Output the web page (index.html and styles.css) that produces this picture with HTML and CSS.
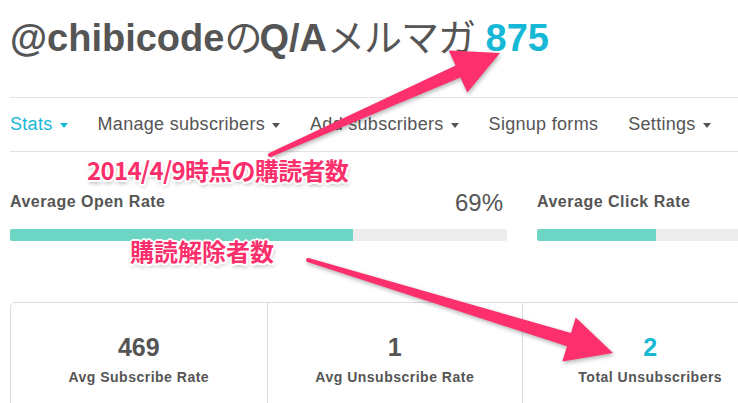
FILE: index.html
```html
<!DOCTYPE html>
<html lang="ja">
<head>
<meta charset="utf-8">
<title>Stats</title>
<link rel="stylesheet" href="styles.css">
</head>
<body>
<div class="screen">
  <div class="page">
    <h1 class="title">@chibicode<span class="jp no">の</span>Q/A<span class="jp kana">メルマガ</span> <span class="count">875</span></h1>

    <nav class="nav">
      <a class="nav-item active">Stats<span class="caret"></span></a>
      <a class="nav-item">Manage subscribers<span class="caret"></span></a>
      <a class="nav-item">Add subscribers<span class="caret"></span></a>
      <a class="nav-item">Signup forms</a>
      <a class="nav-item">Settings<span class="caret"></span></a>
    </nav>

    <section class="rates">
      <div class="rate">
        <div class="rate-head">
          <span class="rate-label">Average Open Rate</span>
          <span class="rate-value">69%</span>
        </div>
        <div class="bar"><div class="bar-fill" style="width:69%"></div></div>
      </div>
      <div class="rate">
        <div class="rate-head">
          <span class="rate-label">Average Click Rate</span>
          <span class="rate-value">24%</span>
        </div>
        <div class="bar"><div class="bar-fill" style="width:24%"></div></div>
      </div>
    </section>

    <section class="summary">
      <div class="cell">
        <div class="num">469</div>
        <div class="label">Avg Subscribe Rate</div>
      </div>
      <div class="cell">
        <div class="num">1</div>
        <div class="label">Avg Unsubscribe Rate</div>
      </div>
      <div class="cell">
        <div class="num highlight">2</div>
        <div class="label">Total Unsubscribers</div>
      </div>
      <div class="cell">
        <div class="num">0</div>
        <div class="label">Total Bounces</div>
      </div>
    </section>
  </div>

  <svg class="arrows" width="738" height="403" viewBox="0 0 738 403">
    <g class="arrow">
      <polygon points="270.8,157 460.4,77.6 467.3,92.6 500,53 448.7,50.6 455.6,65.6 269.2,153"/>
      <circle cx="270" cy="155" r="2"/>
    </g>
    <g class="arrow">
      <polygon points="307.4,261.9 567,346.3 562.3,361.6 613,353 575.7,317.6 571,332.9 308.6,258.1"/>
      <circle cx="308" cy="260" r="2"/>
    </g>
  </svg>

  <div class="note note-1">2014/4/9時点の購読者数</div>
  <div class="note note-2">購読解除者数</div>
</div>
</body>
</html>
```

FILE: styles.css
```css
html, body {
  margin: 0;
  padding: 0;
  background: #fff;
}

body {
  font-family: "Liberation Sans", Arial, "Noto Sans CJK JP", sans-serif;
  color: #555;
  overflow: hidden;
}

.screen {
  position: relative;
  width: 738px;
  height: 403px;
  overflow: hidden;
}

.page {
  width: 1024px;
  margin-left: 10px;
}

.title {
  margin: 13px 0 0;
  font-size: 38px;
  line-height: 44px;
  font-weight: bold;
  color: #555;
  white-space: nowrap;
}

.title .jp {
  font-family: "Noto Sans CJK JP", sans-serif;
  font-weight: normal;
}

.title .no {
  letter-spacing: -3px;
}

.title .kana {
  letter-spacing: -1px;
}

.title .count {
  color: #16b8d6;
}

.nav {
  display: flex;
  margin-top: 37px;
  border-top: 1px solid #e3e3e3;
  border-bottom: 1px solid #e3e3e3;
  height: 53px;
  gap: 30px;
}

.nav-item {
  display: flex;
  align-items: center;
  font-size: 18px;
  line-height: 53px;
  letter-spacing: 0.3px;
  color: #555;
  white-space: nowrap;
}

.nav-item.active {
  color: #16b8d6;
}

.caret {
  display: inline-block;
  width: 0;
  height: 0;
  margin-left: 7px;
  margin-top: 2px;
  border-left: 4px solid transparent;
  border-right: 4px solid transparent;
  border-top: 5px solid #555;
}

.nav-item.active .caret {
  border-top-color: #16b8d6;
}

.rates {
  display: grid;
  grid-template-columns: 497px 497px;
  gap: 30px;
  margin-top: 35px;
}

.rate-head {
  display: flex;
  justify-content: space-between;
  align-items: center;
  height: 30px;
}

.rate-label {
  font-size: 16px;
  font-weight: bold;
  letter-spacing: 0.5px;
}

.rate-value {
  font-size: 24px;
  margin-top: 2px;
  margin-right: 4px;
}

.bar {
  margin-top: 12px;
  height: 12px;
  background: #ececec;
  border-radius: 2px;
  overflow: hidden;
}

.bar-fill {
  height: 100%;
  background: #6dd5c3;
}

.summary {
  display: grid;
  grid-template-columns: repeat(4, 1fr);
  margin-top: 61px;
  border: 1px solid #dcdcdc;
  border-radius: 5px;
}

.cell {
  text-align: center;
  padding: 29px 0 50px;
  border-left: 1px solid #dcdcdc;
}

.cell:first-child {
  border-left: none;
}

.num {
  font-size: 25px;
  line-height: 30px;
  font-weight: bold;
  color: #555;
}

.num.highlight {
  color: #16b8d6;
}

.label {
  margin-top: 6px;
  font-size: 14px;
  line-height: 18px;
  font-weight: bold;
  letter-spacing: 0.5px;
}

.arrows {
  position: absolute;
  left: 0;
  top: 0;
  pointer-events: none;
  filter: drop-shadow(1px 2px 2px rgba(0, 0, 0, 0.3));
}

.arrow {
  fill: #fd2f6c;
}

.note {
  position: absolute;
  font-family: "Noto Sans CJK JP", sans-serif;
  font-weight: bold;
  font-size: 24px;
  line-height: 24px;
  color: #fb2f6b;
  white-space: nowrap;
  text-shadow:
    2px 0 #fff, -2px 0 #fff, 0 2px #fff, 0 -2px #fff,
    1.5px 1.5px #fff, -1.5px 1.5px #fff, 1.5px -1.5px #fff, -1.5px -1.5px #fff,
    1px 3px 4px rgba(0, 0, 0, 0.35);
}

.note-1 {
  left: 87px;
  top: 158px;
  letter-spacing: -0.7px;
}

.note-2 {
  left: 130px;
  top: 239px;
}
```
